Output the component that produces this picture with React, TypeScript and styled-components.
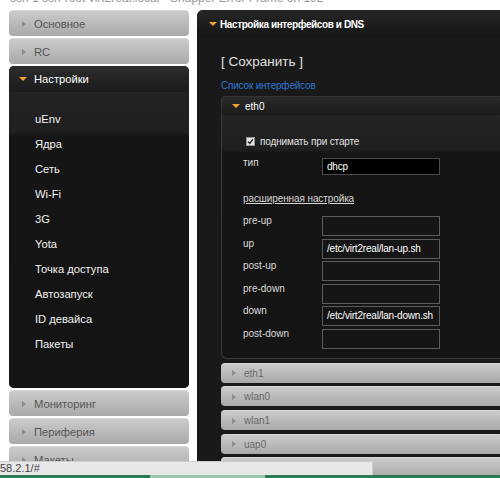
import { Fragment } from "react";
import styled, { createGlobalStyle } from "styled-components";

const GlobalStyle = createGlobalStyle`
  html, body {
    margin: 0;
    padding: 0;
    background: #fff;
    overflow: hidden;
  }
  body {
    font-family: "Liberation Sans", Arial, sans-serif;
  }
`;

const Page = styled.div`
  position: relative;
  width: 500px;
  height: 478px;
  overflow: hidden;
  background: #fff;
`;

// обрезанная строка заголовка окна сверху
const TopStrip = styled.div`
  height: 10px;
  overflow: hidden;
  padding-left: 10px;
  font-size: 12px;
  line-height: 12px;
  color: #9a9a9a;
  white-space: nowrap;

  span {
    display: block;
    margin-top: -8px;
  }
`;

const Main = styled.div`
  display: flex;
  align-items: flex-start;
  gap: 8px;
  padding-left: 9px;
`;

const Sidebar = styled.div`
  width: 180px;
  flex-shrink: 0;
  display: flex;
  flex-direction: column;
  gap: 2px;
`;

const OrangeArrow = styled.span`
  display: inline-block;
  flex-shrink: 0;
  width: 0;
  height: 0;
  border-left: 4px solid transparent;
  border-right: 4px solid transparent;
  border-top: 4px solid #f2a23a;
`;

const GrayArrow = styled.span`
  display: inline-block;
  flex-shrink: 0;
  width: 0;
  height: 0;
  border-top: 3px solid transparent;
  border-bottom: 3px solid transparent;
  border-left: 4px solid #8c8c8c;
`;

const GrayHeader = styled.div<{ $small?: boolean }>`
  height: ${(p) => (p.$small ? 20 : 26)}px;
  display: flex;
  align-items: center;
  gap: ${(p) => (p.$small ? 8 : 8)}px;
  padding-left: ${(p) => (p.$small ? 11 : 13)}px;
  border-radius: 4px;
  background: linear-gradient(#cbcbcb, #a9a9a9);
  border-top: 1px solid #d8d8d8;
  box-sizing: border-box;
  color: ${(p) => (p.$small ? "#6a6a6a" : "#555")};
  font-size: ${(p) => (p.$small ? 10 : 11.2)}px;
  white-space: nowrap;
`;

const DarkSection = styled.div`
  border-radius: 5px;
  background: #141414;
  overflow: hidden;
`;

const DarkHeader = styled.div`
  height: 26px;
  display: flex;
  align-items: center;
  gap: 7px;
  padding-left: 10px;
  background: linear-gradient(#2c2c2c, #1c1c1c);
  color: #fff;
  font-size: 11.2px;
`;

const MenuList = styled.div`
  height: 296px;
  box-sizing: border-box;
  padding-top: 15px;
  background: linear-gradient(#232323 0, #1f1f1f 40px, #151515 44px, #141414);
`;

const MenuItem = styled.div`
  height: 25px;
  line-height: 25px;
  padding-left: 26px;
  color: #f2f2f2;
  font-size: 11.2px;
`;

const Panel = styled.div`
  width: 330px;
  flex-shrink: 0;
  height: 468px;
  border-radius: 6px 0 0 0;
  background: #191919;
  overflow: hidden;
`;

const PanelHeader = styled.div`
  height: 28px;
  display: flex;
  align-items: center;
  gap: 3px;
  padding-left: 12px;
  background: linear-gradient(#262626, #151515);
  color: #fff;
  font-size: 10px;
  letter-spacing: -0.4px;
  font-weight: bold;
  white-space: nowrap;
`;

const PanelBody = styled.div`
  padding: 15px 0 0 24px;
`;

const SaveButton = styled.div`
  color: #e0e0e0;
  font-size: 13.5px;
  line-height: 18px;
`;

const Link = styled.div`
  margin-top: 8px;
  color: #2f74d0;
  font-size: 10px;
  letter-spacing: -0.2px;
  line-height: 14px;
`;

const IfaceList = styled.div`
  margin-top: 3px;
  display: flex;
  flex-direction: column;
  gap: 3.7px;
`;

const OpenIface = styled.div``;

const IfaceHeader = styled.div`
  height: 19px;
  display: flex;
  align-items: center;
  gap: 5px;
  padding-left: 10px;
  box-sizing: border-box;
  border: 1px solid #333;
  border-bottom: none;
  border-radius: 4px 0 0 0;
  background: linear-gradient(#2a2a2a, #1b1b1b);
  color: #fff;
  font-size: 10px;
`;

const IfaceBody = styled.div`
  border: 1px solid #3a3a3a;
  border-top: none;
  border-radius: 0 0 0 6px;
  background: linear-gradient(#242424 0, #1f1f1f 34px, #151515 38px, #141414);
  padding: 18px 0 11px 21px;
  box-sizing: border-box;
  height: 244px;
`;

const CheckRow = styled.div`
  height: 16px;
  display: flex;
  align-items: center;
  gap: 5px;
  margin-left: 3px;
  color: #e0e0e0;
  font-size: 10px;
  letter-spacing: -0.15px;
`;

const CheckBox = styled.span`
  width: 9px;
  height: 9px;
  background: #e8e8e8;
  border: 1px solid #999;
  box-sizing: border-box;
  display: flex;
  align-items: center;
  justify-content: center;
`;

const FormGrid = styled.div<{ $gap?: number }>`
  display: grid;
  grid-template-columns: 79px 118px;
  row-gap: ${(p) => p.$gap ?? 2.6}px;
`;

const Label = styled.div`
  color: #dcdcdc;
  font-size: 10px;
  line-height: 12px;
  margin-top: -1px;
`;

const Field = styled.div<{ $dark?: boolean; $h?: number }>`
  height: ${(p) => p.$h ?? 20}px;
  box-sizing: border-box;
  border: 1px solid ${(p) => (p.$dark ? "#4a4a4a" : "#5c5c5c")};
  background: ${(p) => (p.$dark ? "#000" : "#151515")};
  color: #fff;
  font-size: 10px;
  letter-spacing: -0.2px;
  line-height: ${(p) => (p.$h ?? 20) - 2}px;
  padding-left: 4px;
  white-space: nowrap;
  overflow: hidden;
`;

const TypeGrid = styled(FormGrid)`
  margin-top: 9px;
`;

const Advanced = styled.div`
  margin-top: 17px;
  color: #d8d8d8;
  font-size: 10px;
  letter-spacing: -0.1px;
  line-height: 13px;
  text-decoration: underline;
`;

const AdvGrid = styled(FormGrid)`
  margin-top: 11px;
`;

const StatusBar = styled.div`
  position: absolute;
  left: 0;
  bottom: 3px;
  width: 373px;
  height: 14px;
  box-sizing: border-box;
  border-top: 1px solid #cfcfcf;
  border-right: 1px solid #cfcfcf;
  background: #e8e8e8;
  color: #444;
  font-size: 11px;
  line-height: 13px;
`;

const TaskLine = styled.div`
  position: absolute;
  left: 0;
  bottom: 0;
  width: 500px;
  height: 3px;
  background: linear-gradient(
    to right,
    #2a7d52 0,
    #2a7d52 150px,
    #9cc5ae 150px,
    #9cc5ae 265px,
    #2a7d52 265px
  );
`;

const topItems = ["Основное", "RC"];
const bottomItems = ["Мониторинг", "Периферия", "Макеты"];
const menu = [
  "uEnv",
  "Ядра",
  "Сеть",
  "Wi-Fi",
  "3G",
  "Yota",
  "Точка доступа",
  "Автозапуск",
  "ID девайса",
  "Пакеты",
];

const fields = [
  { name: "pre-up", value: "" },
  { name: "up", value: "/etc/virt2real/lan-up.sh" },
  { name: "post-up", value: "" },
  { name: "pre-down", value: "" },
  { name: "down", value: "/etc/virt2real/lan-down.sh" },
  { name: "post-down", value: "" },
];

const closedIfaces = ["eth1", "wlan0", "wlan1", "uap0", ""];

export default function App() {
  return (
    <Page>
      <GlobalStyle />
      <TopStrip>
        <span>ssh 1 ssh-root virt2real.local - Snapper Error Frame on 192</span>
      </TopStrip>
      <Main>
        <Sidebar>
          {topItems.map((t) => (
            <GrayHeader key={t}>
              <GrayArrow />
              {t}
            </GrayHeader>
          ))}
          <DarkSection>
            <DarkHeader>
              <OrangeArrow />
              Настройки
            </DarkHeader>
            <MenuList>
              {menu.map((m) => (
                <MenuItem key={m}>{m}</MenuItem>
              ))}
            </MenuList>
          </DarkSection>
          {bottomItems.map((t) => (
            <GrayHeader key={t}>
              <GrayArrow />
              {t}
            </GrayHeader>
          ))}
        </Sidebar>

        <Panel>
          <PanelHeader>
            <OrangeArrow />
            Настройка интерфейсов и DNS
          </PanelHeader>
          <PanelBody>
            <SaveButton>[ Сохранить ]</SaveButton>
            <Link>Список интерфейсов</Link>
            <IfaceList>
              <OpenIface>
                <IfaceHeader>
                  <OrangeArrow />
                  eth0
                </IfaceHeader>
                <IfaceBody>
                  <CheckRow>
                    <CheckBox>
                      <svg width="7" height="7" viewBox="0 0 7 7">
                        <path
                          d="M1 3.6 L2.8 5.4 L6 1.2"
                          fill="none"
                          stroke="#222"
                          strokeWidth="1.4"
                        />
                      </svg>
                    </CheckBox>
                    поднимать при старте
                  </CheckRow>
                  <TypeGrid>
                    <Label>тип</Label>
                    <Field $dark $h={17}>
                      dhcp
                    </Field>
                  </TypeGrid>
                  <Advanced>расширенная настройка</Advanced>
                  <AdvGrid>
                    {fields.map((f) => (
                      <Fragment key={f.name}>
                        <Label>{f.name}</Label>
                        <Field>{f.value}</Field>
                      </Fragment>
                    ))}
                  </AdvGrid>
                </IfaceBody>
              </OpenIface>
              {closedIfaces.map((n, i) => (
                <GrayHeader key={i} $small>
                  <GrayArrow />
                  {n}
                </GrayHeader>
              ))}
            </IfaceList>
          </PanelBody>
        </Panel>
      </Main>
      <StatusBar>58.2.1/#</StatusBar>
      <TaskLine />
    </Page>
  );
}
